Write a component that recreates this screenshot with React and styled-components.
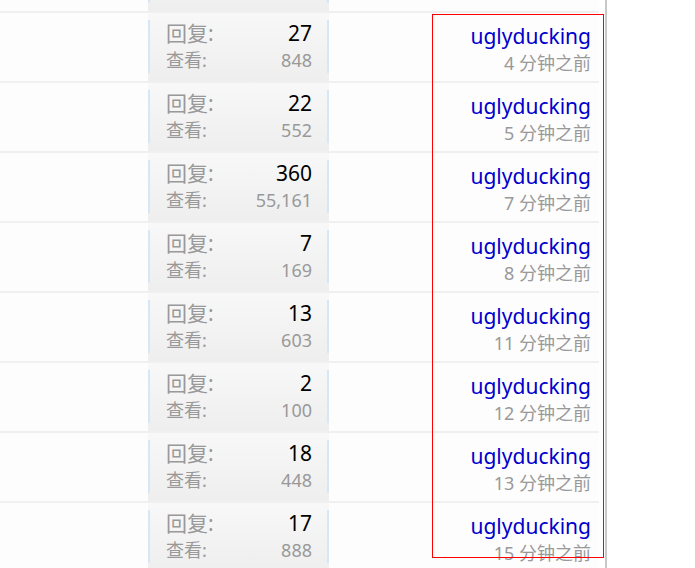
import React from "react";
import styled, { createGlobalStyle } from "styled-components";

const GlobalStyle = createGlobalStyle`
  html, body {
    margin: 0;
    padding: 0;
    background: #ffffff;
    overflow: hidden;
  }
  body {
    font-family: "Noto Sans", "Noto Sans CJK SC", sans-serif;
  }
`;

const Page = styled.div`
  position: relative;
  width: 607px;
  height: 568px;
  box-sizing: border-box;
  padding-right: 6px;
  border-right: 2px solid #c9c9c9;
  overflow: hidden;
`;

const List = styled.div`
  margin-top: -59px;
`;

const Row = styled.div`
  display: grid;
  grid-template-columns: 148px 181px 1fr;
  height: 68px;
  border-top: 2px solid #f0f0f0;
  background: #fdfdfd;
`;

const Subject = styled.div``;

const StatsCell = styled.div`
  background: linear-gradient(#f8f8f8, #eeeeee);
  padding: 7px 0 8px;
`;

const StatsBox = styled.div`
  height: 100%;
  box-sizing: border-box;
  display: flex;
  flex-direction: column;
  gap: 2px;
  border-left: 2px solid #d6e8f8;
  border-right: 2px solid #d6e8f8;
  padding: 1px 15px 0 16px;
`;

const StatLine = styled.div`
  display: flex;
  justify-content: space-between;
  line-height: 25px;
  font-size: ${(p) => (p.$main ? "21px" : "18px")};
  color: #999999;
`;

const Count = styled.span`
  color: ${(p) => (p.$dark ? "#000000" : "#999999")};
`;

const AuthorCell = styled.div`
  display: flex;
  flex-direction: column;
  align-items: flex-end;
  gap: 2px;
  padding: 11px 8px 0 0;
`;

const Author = styled.a`
  display: block;
  font-size: 21px;
  line-height: 25px;
  color: #0000cc;
  text-decoration: none;
`;

const Time = styled.div`
  font-size: 18px;
  line-height: 25px;
  color: #999999;
`;

const Highlight = styled.div`
  position: absolute;
  left: 432px;
  top: 14px;
  width: 172px;
  height: 544px;
  box-sizing: border-box;
  border: 1px solid #ff0000;
  pointer-events: none;
`;

const rows = [
  { r: "27", v: "848", t: "4 分钟之前" },
  { r: "22", v: "552", t: "5 分钟之前" },
  { r: "360", v: "55,161", t: "7 分钟之前" },
  { r: "7", v: "169", t: "8 分钟之前" },
  { r: "13", v: "603", t: "11 分钟之前" },
  { r: "2", v: "100", t: "12 分钟之前" },
  { r: "18", v: "448", t: "13 分钟之前" },
  { r: "17", v: "888", t: "15 分钟之前" },
];

export default function App() {
  return (
    <>
      <GlobalStyle />
      <Page>
        <List>
          <Row>
            <Subject />
            <StatsCell>
              <StatsBox />
            </StatsCell>
            <AuthorCell />
          </Row>
          {rows.map((row, i) => (
            <Row key={i}>
              <Subject />
              <StatsCell>
                <StatsBox>
                  <StatLine $main>
                    <span>回复:</span>
                    <Count $dark>{row.r}</Count>
                  </StatLine>
                  <StatLine>
                    <span>查看:</span>
                    <Count>{row.v}</Count>
                  </StatLine>
                </StatsBox>
              </StatsCell>
              <AuthorCell>
                <Author href="#">uglyducking</Author>
                <Time>{row.t}</Time>
              </AuthorCell>
            </Row>
          ))}
        </List>
        <Highlight />
      </Page>
    </>
  );
}
